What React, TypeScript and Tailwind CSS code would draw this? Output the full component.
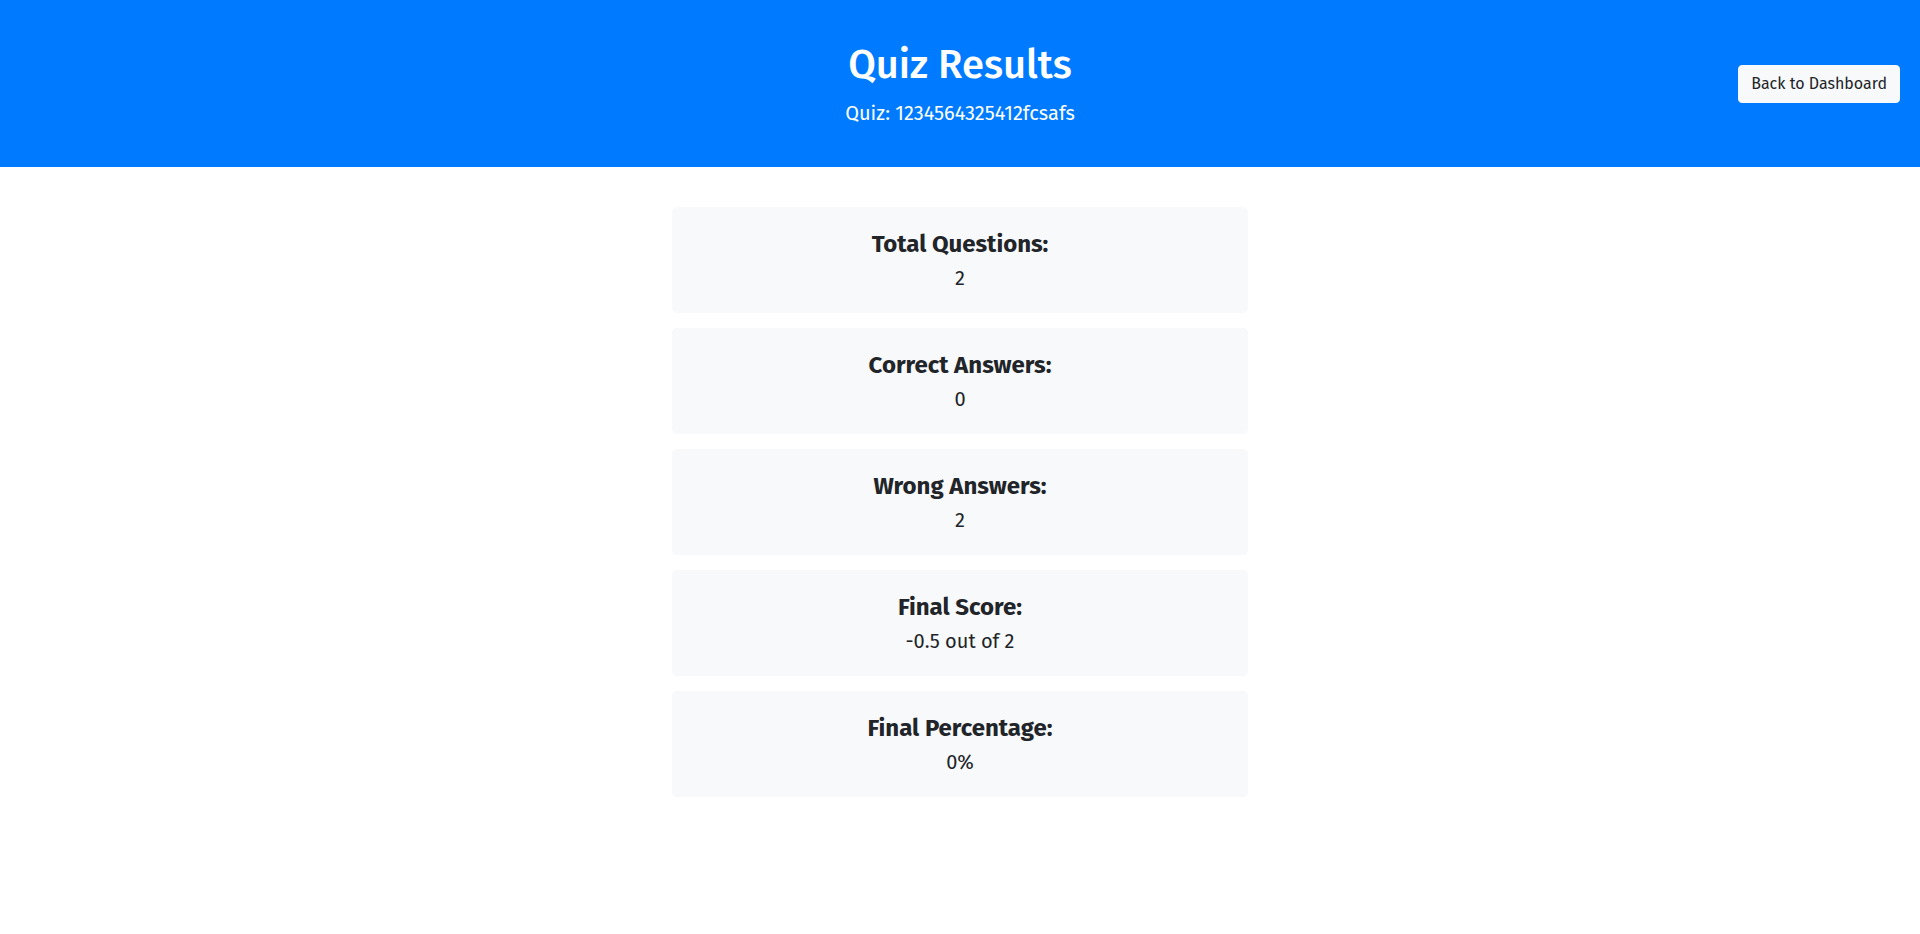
const results = [
  { label: "Total Questions:", value: "2" },
  { label: "Correct Answers:", value: "0" },
  { label: "Wrong Answers:", value: "2" },
  { label: "Final Score:", value: "-0.5 out of 2" },
  { label: "Final Percentage:", value: "0%" },
];

export default function App() {
  return (
    <div
      className="min-h-screen bg-white text-[#212529]"
      style={{ fontFamily: '"Fira Sans", "Open Sans", "Noto Sans", sans-serif' }}
    >
      {/* Header */}
      <header className="grid grid-cols-[1fr_auto_1fr] items-center bg-[#007bff] px-5 pt-[41px] pb-[39px] text-white">
        <div />
        <div className="text-center">
          <h1 className="mb-[9px] text-[40px] font-medium leading-[48px]">Quiz Results</h1>
          <p className="text-[20px] font-normal leading-[30px]">Quiz: 1234564325412fcsafs</p>
        </div>
        <div className="flex justify-end">
          <button className="mb-[2px] h-[38px] rounded-[4px] border border-[#f8f9fa] bg-[#f8f9fa] px-3 text-base leading-6 text-[#212529]">
            Back to Dashboard
          </button>
        </div>
      </header>

      {/* Results */}
      <main className="mx-auto mt-10 flex w-[576px] flex-col gap-[15px]">
        {results.map((item) => (
          <div
            key={item.label}
            className="flex h-[106px] flex-col items-center justify-center rounded-[5px] bg-[#f8f9fa] pt-[2px]"
          >
            <h4 className="mb-1 text-2xl font-bold leading-[29px]">{item.label}</h4>
            <p className="text-[20px] font-normal leading-[30px]">{item.value}</p>
          </div>
        ))}
      </main>
    </div>
  );
}
